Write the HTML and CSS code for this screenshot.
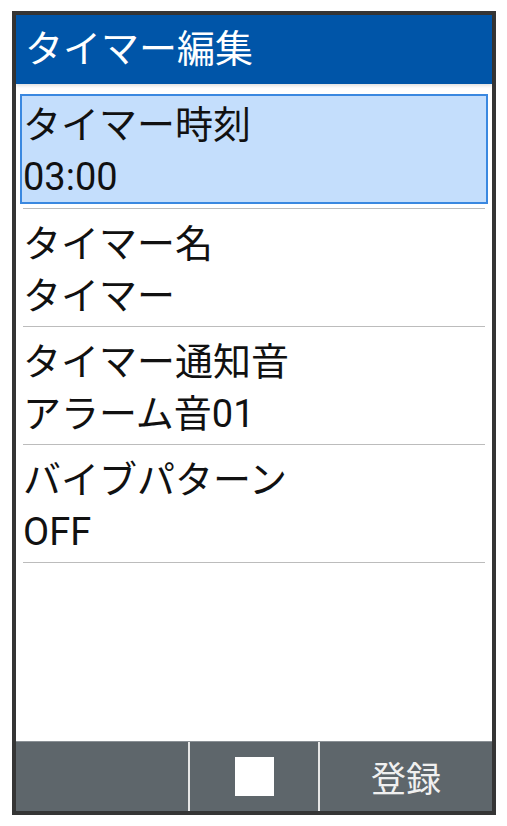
FILE: index.html
```html
<!DOCTYPE html>
<html lang="ja">
<head>
    <meta charset="UTF-8">
    <meta name="viewport" content="width=device-width, initial-scale=1.0">
    <title>タイマー編集</title>
    <link rel="stylesheet" href="styles.css">
</head>
<body>
    <div class="screen">
        <div class="title-bar">タイマー編集</div>

        <div class="list">
            <div class="field selected">
                <div class="label">タイマー時刻</div>
                <div class="value">03:00</div>
            </div>
            <div class="rule"></div>

            <div class="field">
                <div class="label">タイマー名</div>
                <div class="value">タイマー</div>
            </div>
            <div class="rule"></div>

            <div class="field">
                <div class="label">タイマー通知音</div>
                <div class="value">アラーム音01</div>
            </div>
            <div class="rule"></div>

            <div class="field">
                <div class="label">バイブパターン</div>
                <div class="value">OFF</div>
            </div>
            <div class="rule"></div>
        </div>

        <div class="soft-keys">
            <div class="key key-side"></div>
            <div class="key key-center"><span class="key-square"></span></div>
            <div class="key key-side">登録</div>
        </div>
    </div>
</body>
</html>
```

FILE: styles.css
```css
body {
    margin: 0;
    background: #fff;
    font-family: Roboto, "Noto Sans CJK JP", sans-serif;
}
.screen {
    box-sizing: border-box;
    width: 484px;
    height: 804px;
    margin: 11px 0 0 12px;
    border: 4px solid #353535;
    display: flex;
    flex-direction: column;
    background: #fff;
}
.title-bar {
    height: 69px;
    flex-shrink: 0;
    background: #0055a8;
    color: #fff;
    font-size: 38px;
    line-height: 69px;
    padding-left: 9px;
    box-shadow: 0 2px 3px rgba(0,0,0,0.12);
}
.list {
    flex: 1;
    padding: 7px 4px 0;
}
.field {
    box-sizing: border-box;
    height: 109px;
    margin: 4px 0;
    padding: 3px 1px 0;
    border: 2px solid transparent;
    color: #111;
    font-size: 38px;
    line-height: 52px;
}
.field.selected {
    margin-top: 3px;
    height: 110px;
    background: #c4defc;
    border-color: #3a88e0;
}
.rule {
    height: 1px;
    margin: 0 3px;
    background: #bcbcbc;
}
.soft-keys {
    height: 70px;
    flex-shrink: 0;
    display: flex;
    background: #5e666b;
    border-top: 1px solid #8a9095;
    box-sizing: border-box;
}
.key {
    display: flex;
    align-items: center;
    justify-content: center;
    color: #f0f0f0;
    font-size: 35px;
}
.key-side {
    width: 172px;
}
.key-center {
    width: 128px;
    border-left: 2px solid #e6e6e6;
    border-right: 2px solid #e6e6e6;
}
.key-square {
    width: 39px;
    height: 39px;
    background: #fff;
}
```
